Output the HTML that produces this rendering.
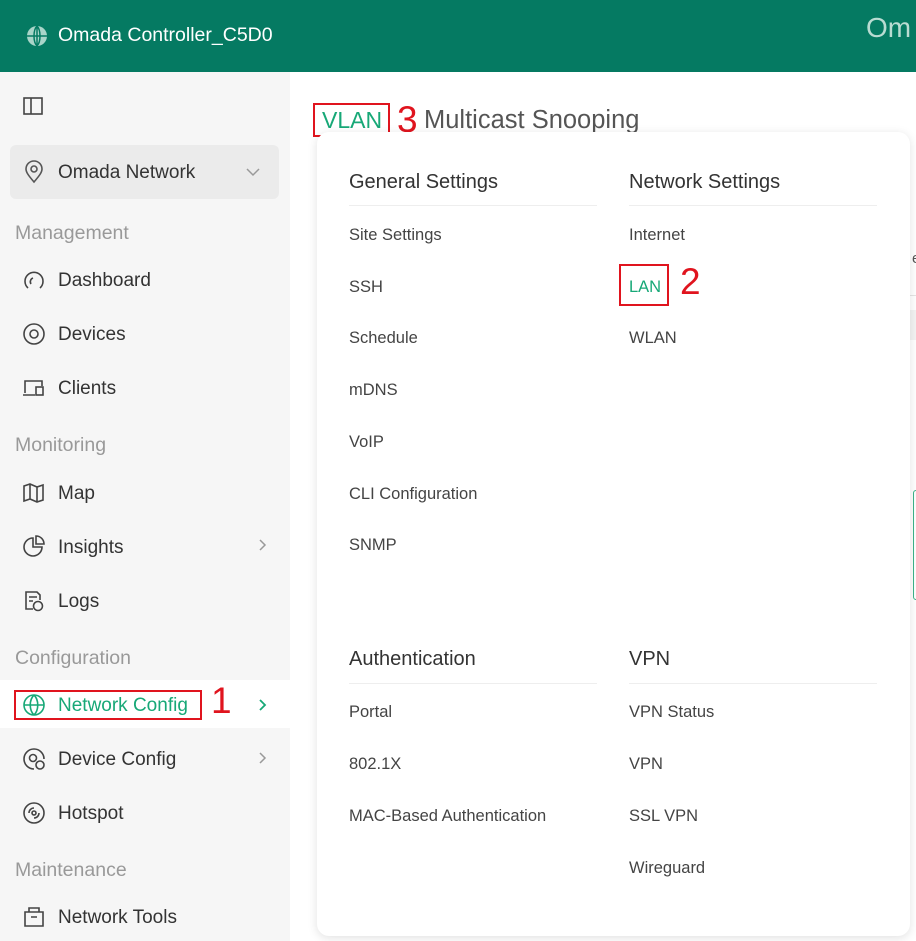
<!DOCTYPE html>
<html><head><meta charset="utf-8"><style>
*{margin:0;padding:0;box-sizing:border-box}
body{width:916px;height:941px;overflow:hidden;background:#fff;font-family:"Liberation Sans",sans-serif;position:relative;color:#333}
.hdr{position:absolute;left:0;top:0;width:916px;height:72px;background:#057a62}
.hdr .t{position:absolute;left:58px;top:24px;color:#fff;font-size:19.5px}
.side{position:absolute;left:0;top:72px;width:290px;height:869px;background:#f6f6f6}
.a{position:absolute;font-size:19px;color:#333;white-space:nowrap;margin-top:2px}
.sec{position:absolute;left:15px;font-size:19.5px;color:#999;margin-top:1px}
.ic{position:absolute;left:22px}
.p{position:absolute;font-size:16.5px;color:#444;white-space:nowrap}
.h{position:absolute;font-size:20px;color:#333}
.ln{position:absolute;height:1px;background:#eee}
.red{position:absolute;border:2px solid #e0141e}
.num{position:absolute;color:#e0141e;font-size:37px}
</style></head><body>
<div class="hdr">
<svg style="position:absolute;left:26px;top:25px" width="22" height="22" viewBox="0 0 22 22"><circle cx="11" cy="11" r="10" fill="#a9d5c9"/><path d="M1 11h20M11 1v20M11 1c-4 4-4 16 0 20M11 1c4 4 4 16 0 20" stroke="#057a62" stroke-width="1.5" fill="none"/></svg>
<div class="t">Omada Controller_C5D0</div>
<div style="position:absolute;left:866px;top:12px;color:#b9dcd2;font-size:28px">Om</div>
</div>
<div class="side">
<svg class="ic" style="top:24px" width="22" height="20"><rect x="2" y="2" width="18" height="16" fill="none" stroke="#444" stroke-width="1.6"/><line x1="9" y1="2" x2="9" y2="18" stroke="#444" stroke-width="1.6"/></svg>
<div style="position:absolute;left:10px;top:73px;width:269px;height:54px;background:#ebebeb;border-radius:6px"></div>
<svg class="ic" style="top:88px;left:24px" width="20" height="24"><path d="M10 22C4 15 2 12 2 9a8 8 0 0116 0c0 3-2 6-8 13z" fill="none" stroke="#555" stroke-width="1.6"/><circle cx="10" cy="9" r="3" fill="none" stroke="#555" stroke-width="1.6"/></svg>
<div class="a" style="left:58px;top:88px">Omada Network</div>
<svg style="position:absolute;left:246px;top:95px" width="14" height="10"><path d="M1 2l6 6 6-6" fill="none" stroke="#999" stroke-width="1.5"/></svg>
<div class="sec" style="top:149px">Management</div>
<svg class="ic" style="top:196px" width="24" height="24"><path d="M6 20A9 9 0 1118 20" fill="none" stroke="#444" stroke-width="1.6"/><path d="M9 16a4 4 0 012-6" fill="none" stroke="#444" stroke-width="1.6"/></svg>
<div class="a" style="left:58px;top:196px">Dashboard</div>
<svg class="ic" style="top:250px" width="24" height="24"><circle cx="12" cy="12" r="10" fill="none" stroke="#444" stroke-width="1.6"/><circle cx="12" cy="12" r="4" fill="none" stroke="#444" stroke-width="1.6"/></svg>
<div class="a" style="left:58px;top:250px">Devices</div>
<svg class="ic" style="top:304px" width="24" height="24"><path d="M3 17V5h17v5M1 19h12" fill="none" stroke="#444" stroke-width="1.6"/><rect x="14" y="11" width="7" height="8" fill="none" stroke="#444" stroke-width="1.6"/></svg>
<div class="a" style="left:58px;top:304px">Clients</div>
<div class="sec" style="top:361px">Monitoring</div>
<svg class="ic" style="top:409px" width="24" height="24"><path d="M2 5l6-2 7 3 6-2v15l-6 2-7-3-6 2z M8 3v15 M15 6v15" fill="none" stroke="#444" stroke-width="1.6"/></svg>
<div class="a" style="left:58px;top:409px">Map</div>
<svg class="ic" style="top:463px" width="24" height="24"><path d="M11 3a9 9 0 109 9h-9z" fill="none" stroke="#444" stroke-width="1.6"/><path d="M14 1a8 8 0 018 8h-8z" fill="none" stroke="#444" stroke-width="1.6"/></svg>
<div class="a" style="left:58px;top:463px">Insights</div>
<svg style="position:absolute;left:258px;top:466px" width="10" height="14"><path d="M2 2l5 5-5 5" fill="none" stroke="#999" stroke-width="1.5"/></svg>
<svg class="ic" style="top:517px" width="24" height="24"><path d="M11 20H4V3h11l3 3v5M7 8h8M7 12h4" fill="none" stroke="#444" stroke-width="1.6"/><circle cx="16" cy="17" r="4.5" fill="none" stroke="#444" stroke-width="1.6"/></svg>
<div class="a" style="left:58px;top:517px">Logs</div>
<div class="sec" style="top:574px">Configuration</div>
<div style="position:absolute;left:0;top:608px;width:290px;height:48px;background:#fff"></div>
<svg class="ic" style="top:621px" width="24" height="24"><circle cx="12" cy="12" r="10" fill="none" stroke="#17a877" stroke-width="1.6"/><path d="M2 12h20M12 2c-5 5-5 15 0 20M12 2c5 5 5 15 0 20" fill="none" stroke="#17a877" stroke-width="1.6"/></svg>
<div class="a" style="left:58px;top:621px;color:#17a877">Network Config</div>
<div class="red" style="left:14px;top:618px;width:188px;height:30px"></div>
<div class="num" style="left:211px;top:608px">1</div>
<svg style="position:absolute;left:258px;top:626px" width="10" height="14"><path d="M2 2l5 5-5 5" fill="none" stroke="#17a877" stroke-width="1.8"/></svg>
<svg class="ic" style="top:675px" width="24" height="24"><path d="M12 22A10 10 0 1122 12" fill="none" stroke="#444" stroke-width="1.6"/><circle cx="11" cy="11" r="3.5" fill="none" stroke="#444" stroke-width="1.6"/><circle cx="18" cy="18" r="4" fill="none" stroke="#444" stroke-width="1.6"/></svg>
<div class="a" style="left:58px;top:675px">Device Config</div>
<svg style="position:absolute;left:258px;top:679px" width="10" height="14"><path d="M2 2l5 5-5 5" fill="none" stroke="#999" stroke-width="1.5"/></svg>
<svg class="ic" style="top:729px" width="24" height="24"><circle cx="12" cy="12" r="10" fill="none" stroke="#444" stroke-width="1.6"/><path d="M7 12a5 5 0 015-5M17 12a5 5 0 01-5 5" fill="none" stroke="#444" stroke-width="1.6"/><circle cx="12" cy="12" r="2" fill="none" stroke="#444" stroke-width="1.6"/></svg>
<div class="a" style="left:58px;top:729px">Hotspot</div>
<div class="sec" style="top:786px">Maintenance</div>
<svg class="ic" style="top:833px" width="24" height="24"><path d="M3 7h18v14H3z M7 7V3h10v4 M9 12h6" fill="none" stroke="#444" stroke-width="1.6"/></svg>
<div class="a" style="left:58px;top:833px">Network Tools</div>
</div>
<div style="position:absolute;left:322px;top:107px;font-size:23px;color:#17a877">VLAN</div>
<div class="red" style="left:313px;top:103px;width:77px;height:34px"></div>
<div class="num" style="left:397px;top:99px">3</div>
<div style="position:absolute;left:424px;top:106px;font-size:25.5px;color:#555">Multicast Snooping</div>
<div style="position:absolute;left:912px;top:250px;font-size:15px;color:#555">e</div>
<div style="position:absolute;left:910px;top:295px;width:6px;height:1px;background:#e5e5e5"></div>
<div style="position:absolute;left:910px;top:310px;width:6px;height:30px;background:#f3f3f3"></div>
<div style="position:absolute;left:913px;top:490px;width:6px;height:110px;border:1.5px solid #3cb48a;border-radius:4px"></div>
<div style="position:absolute;left:317px;top:132px;width:593px;height:804px;background:#fff;border-radius:12px;box-shadow:0 2px 10px rgba(0,0,0,.12)">
<div class="h" style="left:32px;top:39px">General Settings</div>
<div class="ln" style="left:32px;top:73px;width:248px"></div>
<div class="p" style="left:32px;top:94px">Site Settings</div>
<div class="p" style="left:32px;top:146px">SSH</div>
<div class="p" style="left:32px;top:197px">Schedule</div>
<div class="p" style="left:32px;top:249px">mDNS</div>
<div class="p" style="left:32px;top:301px">VoIP</div>
<div class="p" style="left:32px;top:353px">CLI Configuration</div>
<div class="p" style="left:32px;top:404px">SNMP</div>
<div class="h" style="left:312px;top:39px">Network Settings</div>
<div class="ln" style="left:312px;top:73px;width:248px"></div>
<div class="p" style="left:312px;top:94px">Internet</div>
<div class="p" style="left:312px;top:146px;color:#17a877">LAN</div>
<div class="red" style="left:302px;top:132px;width:50px;height:42px"></div>
<div class="num" style="left:363px;top:129px">2</div>
<div class="p" style="left:312px;top:197px">WLAN</div>
<div class="h" style="left:32px;top:516px">Authentication</div>
<div class="ln" style="left:32px;top:551px;width:248px"></div>
<div class="p" style="left:32px;top:571px">Portal</div>
<div class="p" style="left:32px;top:623px">802.1X</div>
<div class="p" style="left:32px;top:675px">MAC-Based Authentication</div>
<div class="h" style="left:312px;top:516px">VPN</div>
<div class="ln" style="left:312px;top:551px;width:248px"></div>
<div class="p" style="left:312px;top:571px">VPN Status</div>
<div class="p" style="left:312px;top:623px">VPN</div>
<div class="p" style="left:312px;top:675px">SSL VPN</div>
<div class="p" style="left:312px;top:727px">Wireguard</div>
</div>
</body></html>
